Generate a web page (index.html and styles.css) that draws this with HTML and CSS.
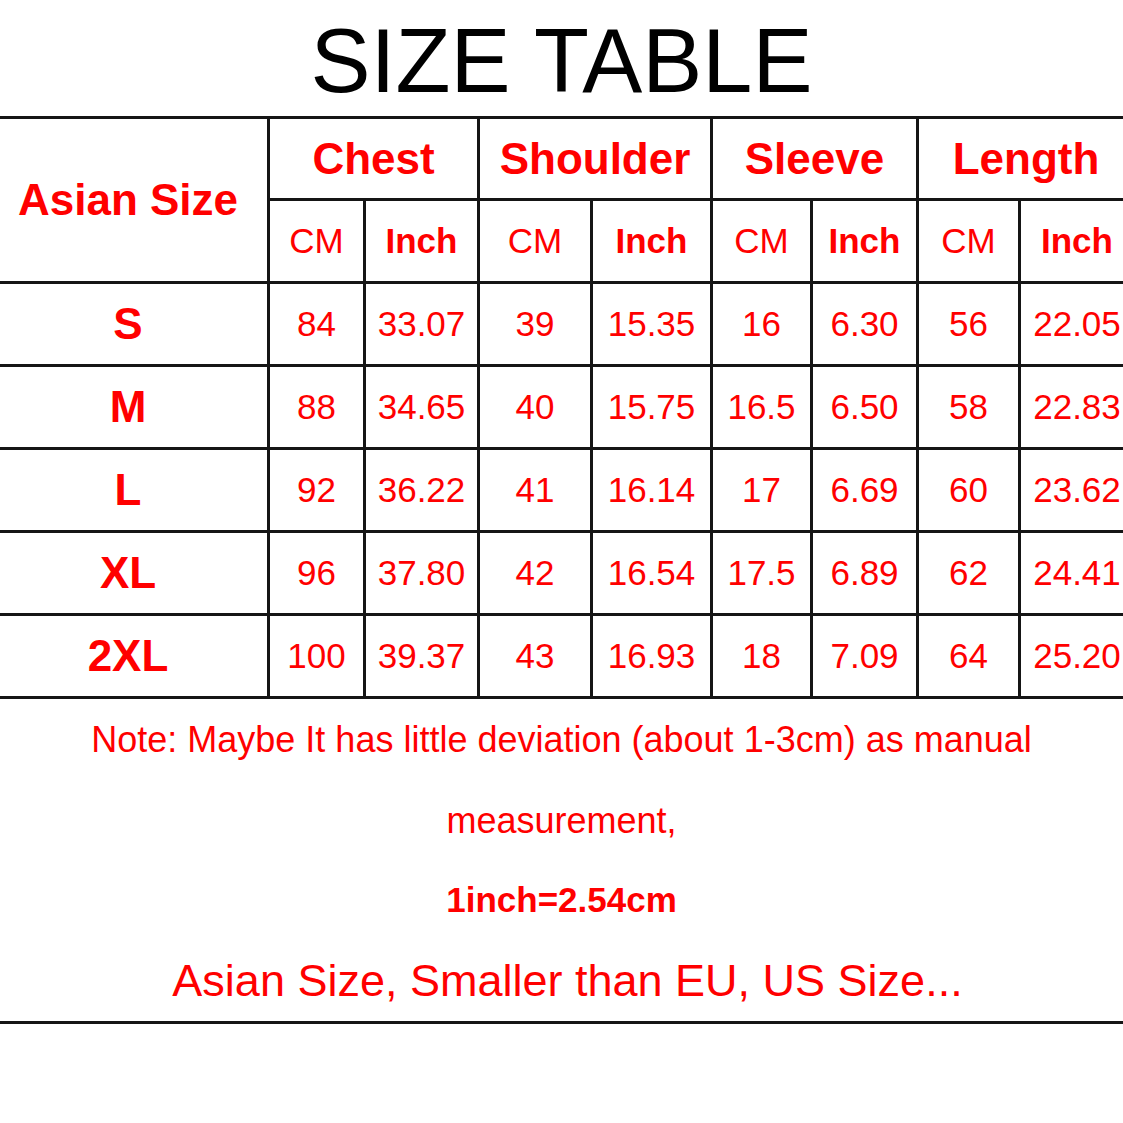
FILE: index.html
```html
<!DOCTYPE html>
<html lang="en">
<head>
<meta charset="utf-8">
<title>Size Table</title>
<link rel="stylesheet" href="styles.css">
</head>
<body>
<div class="page">
  <h1 class="title">SIZE TABLE</h1>
  <div class="table-wrap">
    <div class="grid">
      <div class="cell size-head">Asian Size</div>
      <div class="cell group">Chest</div>
      <div class="cell group">Shoulder</div>
      <div class="cell group">Sleeve</div>
      <div class="cell group">Length</div>

      <div class="cell unit">CM</div><div class="cell unit bold">Inch</div>
      <div class="cell unit">CM</div><div class="cell unit bold">Inch</div>
      <div class="cell unit">CM</div><div class="cell unit bold">Inch</div>
      <div class="cell unit">CM</div><div class="cell unit bold">Inch</div>

      <div class="cell size">S</div>
      <div class="cell val">84</div><div class="cell val">33.07</div>
      <div class="cell val">39</div><div class="cell val">15.35</div>
      <div class="cell val">16</div><div class="cell val">6.30</div>
      <div class="cell val">56</div><div class="cell val">22.05</div>

      <div class="cell size">M</div>
      <div class="cell val">88</div><div class="cell val">34.65</div>
      <div class="cell val">40</div><div class="cell val">15.75</div>
      <div class="cell val">16.5</div><div class="cell val">6.50</div>
      <div class="cell val">58</div><div class="cell val">22.83</div>

      <div class="cell size">L</div>
      <div class="cell val">92</div><div class="cell val">36.22</div>
      <div class="cell val">41</div><div class="cell val">16.14</div>
      <div class="cell val">17</div><div class="cell val">6.69</div>
      <div class="cell val">60</div><div class="cell val">23.62</div>

      <div class="cell size">XL</div>
      <div class="cell val">96</div><div class="cell val">37.80</div>
      <div class="cell val">42</div><div class="cell val">16.54</div>
      <div class="cell val">17.5</div><div class="cell val">6.89</div>
      <div class="cell val">62</div><div class="cell val">24.41</div>

      <div class="cell size">2XL</div>
      <div class="cell val">100</div><div class="cell val">39.37</div>
      <div class="cell val">43</div><div class="cell val">16.93</div>
      <div class="cell val">18</div><div class="cell val">7.09</div>
      <div class="cell val">64</div><div class="cell val">25.20</div>
    </div>
  </div>
  <p class="note">Note: Maybe It has little deviation (about 1-3cm) as manual measurement,</p>
  <p class="conv">1inch=2.54cm</p>
  <p class="asian">Asian Size, Smaller than EU, US Size...</p>
</div>
</body>
</html>
```
FILE: styles.css
```css
html, body {
  margin: 0;
  padding: 0;
  background: #ffffff;
  overflow: hidden;
}

.page {
  width: 1123px;
  font-family: "Liberation Sans", Arial, sans-serif;
  overflow: hidden;
}

.title {
  margin: 0;
  padding: 11px 0 5px;
  font-size: 90px;
  font-weight: normal;
  line-height: 100px;
  color: #000000;
  text-align: center;
}

.table-wrap {
  width: 1123px;
  overflow: hidden;
}

.grid {
  display: grid;
  width: max-content;
  grid-template-columns: 267px 93px 111px 110px 117px 97px 103px 99px 112px;
  grid-template-rows: 79px 80px 80px 80px 80px 80px 80px;
  gap: 3px;
  padding: 3px 0;
  background: #151515;
}

.cell {
  background: #ffffff;
  color: #ff0000;
  display: flex;
  align-items: center;
  justify-content: center;
  white-space: nowrap;
}

.size-head {
  grid-row: span 2;
  font-size: 44px;
  font-weight: bold;
  padding-right: 11px;
}

.group {
  grid-column: span 2;
  font-size: 44px;
  font-weight: bold;
}

.unit {
  font-size: 35px;
}

.bold {
  font-weight: bold;
}

.size {
  font-size: 44px;
  font-weight: bold;
  padding-right: 11px;
}

.val {
  font-size: 35px;
}

.note {
  margin: 0;
  font-size: 36px;
  line-height: 81px;
  color: #ff0000;
  text-align: center;
}

.conv {
  margin: 0;
  font-size: 35px;
  font-weight: bold;
  line-height: 78px;
  color: #ff0000;
  text-align: center;
}

.asian {
  margin: 0;
  padding: 2px 0 0 12px;
  font-size: 45px;
  line-height: 80px;
  color: #ff0000;
  text-align: center;
  border-bottom: 3px solid #151515;
}
```
